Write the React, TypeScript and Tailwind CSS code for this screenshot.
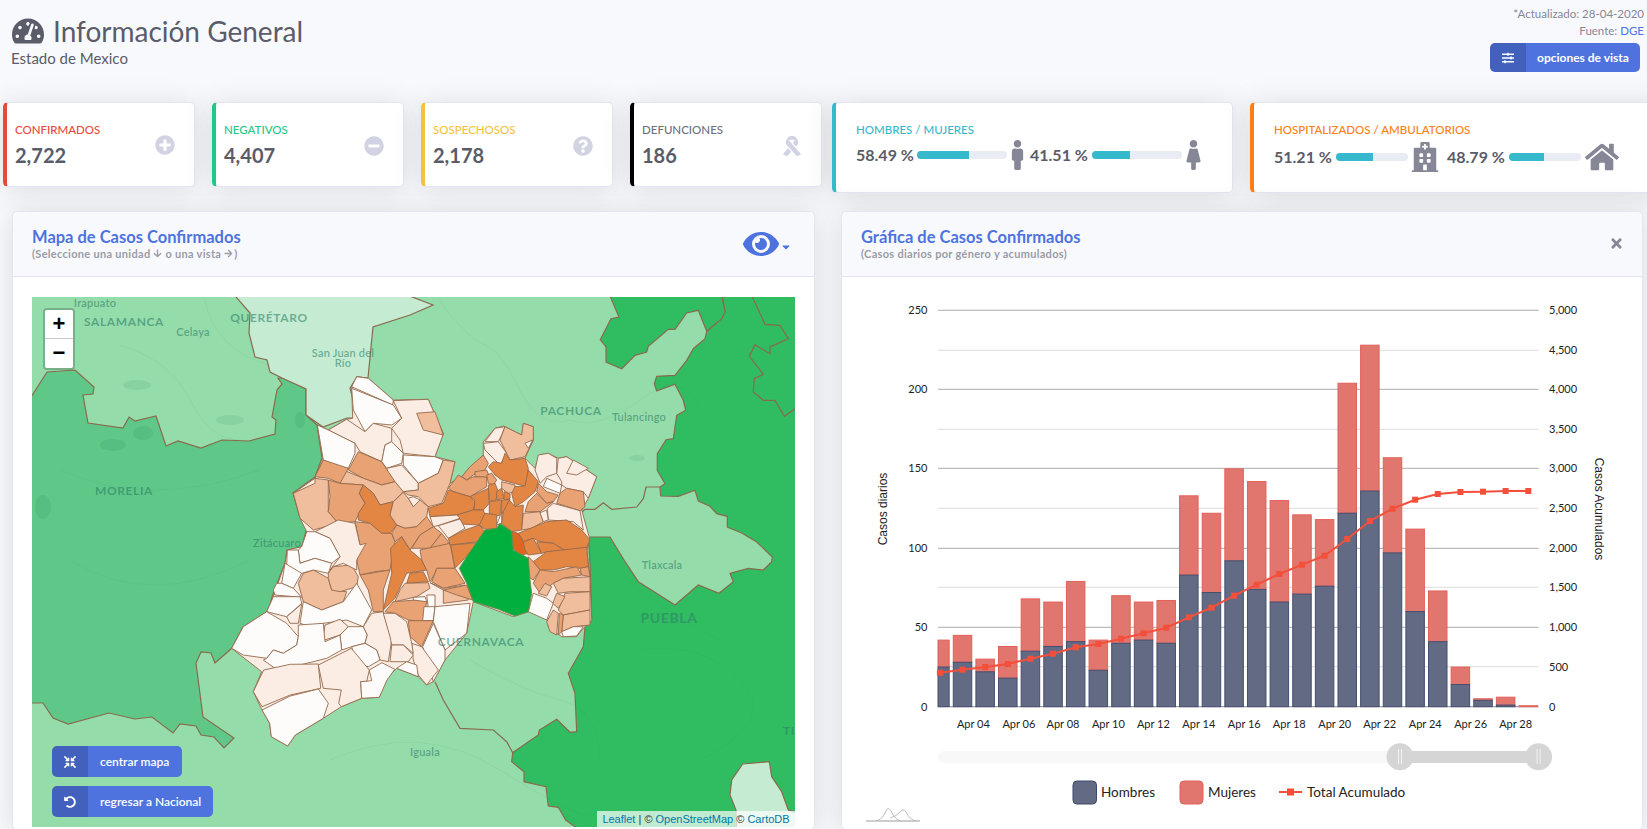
import React from "react";
import {
  FaTachometerAlt, FaPlusCircle, FaMinusCircle, FaQuestionCircle, FaRibbon, FaMale, FaFemale,
  FaHospital, FaHome, FaSlidersH, FaEye, FaCompressArrowsAlt, FaUndoAlt, FaTimes, FaCaretDown, FaArrowDown, FaArrowRight,
} from "react-icons/fa";

const conv = (s: string, ox: number, oy: number) =>
  s.trim().split(/\s+/).map((p) => {
    const [a, b] = p.split(",").map(Number);
    return `${(ox + a / 3).toFixed(1)},${(oy + b / 3).toFixed(1)}`;
  }).join(" ");
const Z3 = (s: string) => conv(s, 200, 360);
const R = (s: string) => conv(s, 420, 297);

const w = "#fdfcfb", p1 = "#fbece4", p2 = "#f0bd9d", p3 = "#e9a273", p4 = "#e38644", p5 = "#e0661f";

const munis: [string, string][] = [
  [p1, "470,50 505,55 580,120 685,118 730,220 705,290 765,305 750,370 785,350 850,285 850,245 885,205 910,198 965,225 970,190 1000,200 1000,240 975,295 1005,325 1020,285 1045,280 1075,295 1100,290 1190,350 1165,415 1145,450 1170,540 1160,570 1170,650 1175,780 1150,805 1130,830 1085,830 1045,800 1040,770 985,755 940,770 820,725 800,820 735,900 700,965 680,975 655,950 590,925 555,960 538,1012 485,1015 424,1040 370,1075 286,1125 263,1158 214,1130 209,1090 186,1050 160,995 185,935 95,865 130,800 200,755 220,710 255,610 262,570 305,560 320,515 300,475 280,400 345,355 370,300 352,195 385,210 440,178 458,175 455,85"],
  [w, "470,50 505,55 580,120 578,135 455,80"],
  [w, "455,85 580,135 605,175 575,195 520,190 495,215 460,150"],
  [p1, "580,122 685,118 730,222 705,290 610,280 600,240 575,205 605,175"],
  [p2, "650,160 705,155 730,225 670,210"],
  [p1, "385,210 440,178 495,215 520,190 575,205 575,245 555,255 545,305 480,275 465,250"],
  [w, "352,195 385,210 465,250 465,280 445,325 415,320 370,300"],
  [w, "575,245 610,280 605,310 560,325 545,305 555,255"],
  [w, "610,285 705,290 730,300 715,340 655,370 610,315"],
  [p1, "560,325 605,315 655,370 655,390 610,395 565,345"],
  [p2, "730,300 765,305 750,370 725,430 685,440 655,410 625,405 610,395 655,390 655,370 715,340"],
  [p3, "475,275 545,305 585,365 545,375 490,355 445,330"],
  [p2, "430,330 490,355 545,375 585,365 610,395 580,425 540,435 520,400 490,375 420,370"],
  [p3, "370,300 445,325 420,370 385,355 345,350"],
  [p2, "345,355 385,360 385,455 415,490 340,510 300,475 280,400 345,370"],
  [p3, "385,360 420,370 490,375 478,400 495,430 475,465 465,485 415,490 385,455 390,410"],
  [p4, "490,375 520,400 540,435 580,425 570,465 590,495 570,520 545,520 510,490 475,480 475,460 495,430 478,400"],
  [p2, "610,397 625,415 640,440 660,420 685,440 680,470 650,500 615,505 590,495 570,465 580,425"],
  [p1, "625,415 640,410 660,420 640,440"],
  [p3, "465,485 510,490 545,520 575,520 585,545 570,630 525,635 480,645 470,600 480,555"],
  [p3, "590,495 615,505 650,500 680,470 700,500 660,525 630,570 605,530 585,545 575,520"],
  [p3, "660,525 700,500 725,520 690,565 635,565"],
  [p3, "725,520 745,545 745,555 690,565"],
  [p4, "605,530 630,570 665,600 680,630 620,640 585,715 550,750 575,640 572,565"],
  [p4, "630,640 670,635 685,665 620,670"],
  [p3, "660,570 750,550 765,625 710,625 705,640 690,665 680,630 665,600"],
  [p3, "480,645 570,630 550,690 550,755 520,755 505,690"],
  [p3, "710,625 765,625 795,670 730,685 695,665 705,640"],
  [p2, "615,670 685,668 690,685 650,710 585,725 600,690"],
  [p2, "690,668 730,685 795,675 805,720 730,730 730,690"],
  [p3, "730,690 800,675 818,720 770,705"],
  [p3, "555,755 580,725 650,720 680,725 670,785 625,780 585,760"],
  [w, "640,712 675,710 680,725 640,720"],
  [w, "680,705 705,705 705,745 685,745"],
  [w, "672,740 705,740 700,782 668,782"],
  [p3, "625,782 700,782 665,860 630,830"],
  [w, "705,740 810,730 800,820 735,870 700,785"],
  [w, "700,790 735,870 735,900 700,965 680,900 668,860"],
  [p1, "635,850 665,860 715,930 680,975 655,945 640,900"],
  [p2, "340,630 385,655 395,690 440,695 430,725 365,750 310,725 295,670 310,640"],
  [p2, "385,640 400,620 455,615 475,650 470,680 420,695 395,690 385,655"],
  [p1, "345,515 415,480 465,490 480,555 498,550 470,600 470,630 430,610 400,620 390,630 420,590 390,535"],
  [w, "320,515 345,515 390,535 420,590 395,610 345,595 300,610 295,570 305,560"],
  [w, "262,570 295,570 300,610 345,595 395,610 385,640 340,630 305,640 295,650 260,615"],
  [w, "255,610 305,640 280,685 245,670"],
  [w, "230,670 245,670 280,685 305,712 225,705 220,690"],
  [w, "220,710 300,710 305,730 260,770 200,755"],
  [p1, "260,770 305,732 295,790 270,790"],
  [w, "310,725 365,750 430,725 470,670 515,750 490,800 440,780 370,790 330,800 300,790"],
  [p1, "375,795 420,778 445,800 420,825 368,842"],
  [w, "420,825 445,800 490,800 502,825 495,850 455,860 425,870"],
  [p1, "490,800 515,760 550,755 575,840 565,905 540,900 530,870 495,850 502,825"],
  [p1, "550,760 585,760 620,785 635,850 640,880 610,855 575,855 570,830"],
  [p1, "575,855 610,855 640,885 625,905 570,905"],
  [w, "590,925 620,905 650,915 655,950"],
  [w, "455,860 495,850 530,870 540,900 505,920 470,910"],
  [w, "95,865 130,800 200,755 260,790 295,830 290,855 250,880 220,870 200,895 130,885"],
  [w, "295,795 370,790 375,845 420,825 425,870 380,895 300,915 225,925 190,900 200,895 220,870 250,880 290,855 295,830"],
  [p1, "160,995 191,930 271,913 355,912 362,985 271,1005 186,1040"],
  [p1, "355,915 454,865 508,930 500,965 482,965 485,1015 424,1040 416,1030 424,990 370,985"],
  [w, "485,1015 482,965 515,962 508,930 546,908 584,928 561,960 538,1012"],
  [w, "186,1050 271,1008 355,987 385,1030 370,1075 286,1125 263,1158 214,1130 209,1090"],
  [p1, "885,205 915,200 905,225 895,245 855,245"],
  [p1, "850,250 895,245 920,280 900,315 855,270"],
  [p2, "915,200 965,225 970,190 1000,200 1000,240 975,290 930,300 900,240"],
  [w, "975,250 998,240 985,265"],
  [p3, "850,285 865,310 855,330 820,345 800,360 785,350 810,320"],
  [p4, "915,280 930,300 975,295 985,325 980,380 905,360 885,345 865,320 880,305 905,310"],
  [p3, "775,345 800,360 820,350 860,350 860,380 810,410 760,395 745,385"],
  [p3, "825,335 860,330 870,355 850,350 825,350"],
  [p4, "745,390 810,410 825,425 820,450 770,465 690,470 685,445 730,430"],
  [p4, "810,410 865,385 868,430 850,450 822,450 825,420"],
  [p3, "860,345 875,340 890,360 880,375 865,370"],
  [p2, "905,365 945,375 945,395 925,400 905,385"],
  [p4, "985,330 1015,365 1005,395 970,425 945,440 935,400 945,380 975,378"],
  [p4, "865,375 885,370 895,395 885,425 868,420"],
  [p4, "890,395 905,385 912,415 890,420"],
  [p4, "912,395 930,402 930,415 912,420"],
  [p4, "868,425 905,420 900,465 890,468 868,460"],
  [p4, "905,420 930,418 910,460 905,460"],
  [p4, "820,450 850,450 855,465 840,495 780,492 770,465"],
  [p4, "855,460 890,465 890,505 855,508 838,495"],
  [w, "905,455 905,490 890,495"],
  [p4, "928,420 945,440 970,435 965,510 935,515 905,490 910,455"],
  [p3, "1015,370 1040,395 1075,405 1060,425 1040,430 1010,395"],
  [p1, "1015,285 1045,280 1070,295 1070,340 1040,350 1020,370 1005,330"],
  [w, "1040,355 1085,375 1080,400 1030,380"],
  [p1, "1075,295 1100,290 1190,350 1165,415 1150,395 1100,385 1085,375 1085,365 1070,340"],
  [p1, "1100,340 1120,300 1165,325 1130,345"],
  [p3, "1100,385 1150,395 1155,440 1140,452 1070,430 1080,400"],
  [p3, "1010,400 1040,430 1060,425 1020,455 975,455 985,425"],
  [p2, "970,460 1020,455 1030,485 995,505 965,510"],
  [p1, "1060,430 1140,452 1150,510 1120,485 1045,480 1042,445"],
  [p1, "1020,458 1040,450 1045,480 1030,485"],
  [p4, "955,520 1040,485 1100,480 1145,510 1170,540 1160,562 1100,575 1060,550 1020,545 1000,535 970,545"],
  [p5, "935,515 955,520 970,545 990,580 960,585 940,565"],
  [p4, "970,545 1000,535 1025,580 985,585 975,570"],
  [p4, "1010,545 1060,550 1100,575 1040,575 1025,580"],
  [p4, "1000,605 1040,575 1160,562 1165,620 1140,625 1100,620 1060,630 1020,630"],
  [p3, "985,590 1000,605 1020,630 1000,660 985,650"],
  [p3, "1020,630 1060,635 1130,620 1145,645 1090,655 1060,670 1020,700 1000,670"],
  [p3, "1140,625 1165,620 1170,650 1145,645"],
  [p2, "1060,670 1090,655 1170,650 1170,695 1110,695 1075,700"],
  [p2, "1095,700 1170,695 1170,750 1090,765 1075,750"],
  [p2, "1035,670 1055,680 1040,708 1015,700"],
  [w, "1000,700 1040,715 1060,730 1040,780 985,755"],
  [p2, "1070,700 1095,710 1075,745 1058,730"],
  [p2, "1090,765 1170,750 1170,795 1120,800 1085,815"],
  [w, "1085,815 1120,800 1150,800 1130,828 1090,830"],
  [p2, "1060,750 1075,760 1070,825 1050,815 1040,785"],
  [p3, "1078,760 1090,765 1085,815 1075,825"],
  [p1, "690,470 770,465 780,475 720,495 700,500"],
  [p1, "715,497 780,477 795,505 745,535"],
  [p4, "795,510 838,495 855,515 835,545 750,555 745,535"],
  [p4, "752,555 835,548 780,610 765,625"],
];

const border = "#8a6a4e";

const labels: [string, number, number, number, boolean?][] = [
  ["Irapuato", 95, 307, 11],
  ["SALAMANCA", 124, 326, 12, true],
  ["Celaya", 193, 336, 11],
  ["QUERÉTARO", 269, 322, 12, true],
  ["San Juan del", 343, 357, 11],
  ["Río", 343, 367, 11],
  ["PACHUCA", 571, 415, 12, true],
  ["Tulancingo", 639, 421, 11],
  ["MORELIA", 124, 495, 12, true],
  ["Zitácuaro", 277, 547, 11],
  ["Tlaxcala", 662, 569, 11],
  ["PUEBLA", 669, 623, 14, true],
  ["Iguala", 425, 756, 11],
  ["TI", 789, 735, 12, true],
];

function MapArt() {
  return (
    <svg viewBox="32 297 763 530" className="block h-full w-full">
      <rect x="32" y="297" width="763" height="530" fill="#95dcab" />
      <polygon
        fill="#5fc888"
        stroke={border}
        strokeWidth="1.2"
        points="26,405 47,372 75,370 94,387 93,394 83,395 88,423 123,428 129,417 135,421 156,416 166,446 178,441 201,448 222,440 249,441 275,434 276,420 272,417 277,390 282,384 278,378 287,378 306,389 306,415 317,425 322,458 315,477 293,493 300,517 307,527 302,547 287,550 285,563 272,597 267,617 243,627 232,648 215,663 211,653 201,652 196,663 203,717 234,738 224,748 214,737 201,735 196,726 180,724 173,733 152,717 135,719 109,713 68,724 53,718 43,703 26,703"
      />
      <g fill="#55be80">
        <ellipse cx="113" cy="445" rx="13" ry="6" />
        <ellipse cx="143" cy="433" rx="10" ry="7" />
        <ellipse cx="43" cy="507" rx="8" ry="12" />
        <ellipse cx="300" cy="420" rx="5" ry="8" />
      </g>
      <g fill="#87d2a0">
        <ellipse cx="137" cy="385" rx="14" ry="5" />
        <ellipse cx="230" cy="420" rx="14" ry="5" />
        <ellipse cx="637" cy="458" rx="8" ry="3" />
      </g>
      <polygon
        fill="#c5ebd3"
        stroke={border}
        strokeWidth="1.2"
        points="230,290 250,313 249,333 255,357 267,360 270,372 282,378 306,389 306,415 323,427 347,418 358,418 350,388 357,377 368,378 373,327 410,315 433,305 394,290"
      />
      <polygon
        fill="#30bd62"
        stroke={border}
        strokeWidth="1.2"
        points={R("905,-15 915,45 905,65 860,103 855,125 820,155 800,190 765,235 710,238 703,260 710,282 765,262 790,310 797,340 770,355 760,425 738,428 712,470 712,520 735,560 720,570 722,597 775,598 825,580 835,612 870,628 890,650 922,658 922,690 965,708 1010,735 1057,780 1055,794 1030,819 985,814 930,829 940,854 897,889 835,864 765,924 655,854 612,789 570,720 505,720 510,800 515,969 495,989 490,1049 445,1129 465,1189 470,1304 450,1306 410,1267 358,1299 355,1314 278,1367 275,1394 312,1424 312,1454 378,1469 385,1527 415,1531 437,1569 500,1615 1140,1615 1140,-15")}
      />
      <polygon
        fill="#30bd62"
        stroke={border}
        strokeWidth="1.2"
        points={R("565,-15 597,60 573,65 541,128 558,150 558,195 605,215 645,175 680,165 685,148 745,97 765,97 800,48 835,40 860,103 905,65 915,45 903,-15")}
      />
      <polygon
        fill="#c5ebd3"
        stroke={border}
        strokeWidth="1.2"
        points={R("968,1401 1048,1394 1055,1439 1085,1484 1105,1539 1140,1550 1140,1615 950,1615 948,1539 930,1494 935,1449")}
      />
      <g fill="none" stroke={border} strokeWidth="1.2">
        <polyline points={R("990,-15 1035,82 1080,85 1105,125 1050,150 1050,170 1005,143 988,178 1030,232 1003,245 1000,285 1030,310 1065,310 1093,358 1140,325")} />
        <polyline points={R("495,637 525,637 550,617 575,637 650,630 670,605 678,570 720,570")} />
        <polyline points={R("45,1154 70,1209 120,1294 220,1299 260,1334 278,1367")} />
        <polyline points={R("470,660 495,637")} />
        <polyline points={R("475,660 505,720")} />
      </g>
      <g fill="none" stroke="#1c6b45" strokeOpacity="0.08" strokeWidth="0.8">
        <path d="M438 300 Q470 340 485 345 T520 390 T570 420 Q600 430 640 400 T700 405" />
        <path d="M120 345 Q170 360 190 400 T240 440 M205 300 Q215 350 270 365" />
        <path d="M470 660 Q520 690 560 700 T600 760 M330 760 Q420 720 500 770 T590 815" />
        <path d="M620 575 Q680 620 720 640 M60 470 Q150 510 260 470 M70 560 Q150 610 250 560" />
        <path d="M640 650 Q700 640 740 680 T700 760" />
      </g>
      <g fontFamily="Lato, sans-serif" textAnchor="middle">
        {labels.map(([t, x, y, s, b]) => (
          <text key={t} x={x} y={y} fontSize={s} fontWeight={b ? 700 : 600} letterSpacing={b ? 0.6 : 0.2} fill="#2f7f66" fillOpacity="0.6">
            {t}
          </text>
        ))}
      </g>
      <g stroke="#946a4c" strokeWidth="0.9" strokeLinejoin="round">
        {munis.map(([f, p], i) => (
          <polygon key={i} fill={f} points={Z3(p)} />
        ))}
        <polygon
          fill="#00af3e"
          stroke="#6f8a4a"
          points={Z3("900,490 935,515 940,570 985,595 990,660 995,700 985,755 945,768 895,748 820,725 800,670 778,625 800,590 855,510 890,505")}
        />
      </g>
      <text x="481" y="646" fontFamily="Lato, sans-serif" textAnchor="middle" fontSize="12" fontWeight="700" letterSpacing="0.6" fill="#2f7f66" fillOpacity="0.6">
        CUERNAVACA
      </text>
    </svg>
  );
}

const cumY = [672.7, 669.7, 667, 664, 658.7, 653.7, 647.3, 644, 638.7, 633.3, 627.7, 617.3, 607.7, 595.7, 584.7, 574, 564.7, 555.7, 539, 521, 508.7, 499.7, 494, 492, 491.7, 491, 491];
const hom = [25, 28, 22, 18, 35, 38, 41, 23, 40, 42, 40, 83, 72, 92, 74, 66, 71, 76, 122, 136, 97, 60, 41, 14, 4, 1, 0];
const tot = [42, 45, 30, 38, 68, 66, 79, 42, 70, 66, 67, 133, 122, 150, 142, 130, 121, 118, 204, 228, 157, 112, 73, 25, 5, 6, 0.6];

const Y0 = 706.7;
const U = (706.7 - 310.3) / 250;
const cx = (i: number) => 939.9 + i * 22.63;

const left = [[250, 310.3], [200, 389.3], [150, 468.3], [100, 548.3], [50, 627.3], [0, 706.7]];
const right = [["5,000", 310.3], ["4,500", 350.3], ["4,000", 389.3], ["3,500", 429.3], ["3,000", 468.3], ["2,500", 508.3], ["2,000", 548.3], ["1,500", 587.3], ["1,000", 627.3], ["500", 666.7], ["0", 706.7]];
const xl = ["Apr 04", "Apr 06", "Apr 08", "Apr 10", "Apr 12", "Apr 14", "Apr 16", "Apr 18", "Apr 20", "Apr 22", "Apr 24", "Apr 26", "Apr 28"];
const xc = [247, 346, 442, 541, 639, 738, 837, 935, 1034, 1132, 1231, 1330, 1428];

function Chart() {
  const f = "Lato, sans-serif";
  return (
    <svg viewBox="842 277 800 552" className="block h-full w-full">
      {right.map(([t, y], i) => (
        <line key={i} x1="938" x2="1538.6" y1={y as number} y2={y as number} stroke={i % 2 === 0 && i < 10 ? "#acacac" : i === 10 ? "#888" : "#dcdcdc"} strokeWidth="1" />
      ))}
      {left.map(([t, y]) => (
        <text key={t} x="927.5" y={y + 4} textAnchor="end" fontFamily={f} fontSize="11" fill="#222">{t}</text>
      ))}
      {right.map(([t, y]) => (
        <text key={t as string} x="1549" y={(y as number) + 4} fontFamily={f} fontSize="11" fill="#222">{t}</text>
      ))}
      {hom.map((h, i) => {
        const x = Math.max(938, cx(i) - 9.25);
        const wd = cx(i) + 9.25 - x;
        return (
          <g key={i}>
            <rect x={x} y={Y0 - tot[i] * U} width={wd} height={(tot[i] - h) * U} fill="#e1766f" stroke="#e2605a" strokeWidth="1" />
            {h > 0 && <rect x={x} y={Y0 - h * U} width={wd} height={h * U} fill="#626b83" stroke="#454f70" strokeWidth="1" />}
          </g>
        );
      })}
      <polyline fill="none" stroke="#f44f3b" strokeWidth="2" points={cumY.map((y, i) => `${cx(i)},${y}`).join(" ")} />
      {cumY.map((y, i) => (
        <rect key={i} x={cx(i) - 3} y={y - 3} width="6" height="6" fill="#f44f3b" />
      ))}
      {xl.map((t, i) => (
        <text key={t} x={860 + xc[i] / 2.178} y="728" textAnchor="middle" fontFamily={f} fontSize="11" fill="#222">{t}</text>
      ))}
      <text transform="translate(887 509) rotate(-90)" textAnchor="middle" fontFamily="'Liberation Sans', sans-serif" fontSize="12" fill="#222">Casos diarios</text>
      <text transform="translate(1595 509) rotate(90)" textAnchor="middle" fontFamily="'Liberation Sans', sans-serif" fontSize="12" fill="#222">Casos Acumulados</text>

      <rect x="938" y="751" width="601" height="12" rx="6" fill="#f8f8f8" />
      <rect x="1400" y="751" width="138" height="12" fill="#d5d5d5" />
      {[1400, 1538.6].map((c) => (
        <g key={c}>
          <circle cx={c} cy="756.7" r="13.5" fill="#d5d5d5" />
          <line x1={c - 1.5} x2={c - 1.5} y1="749" y2="764" stroke="#f0f0f0" />
          <line x1={c + 1.5} x2={c + 1.5} y1="749" y2="764" stroke="#f0f0f0" />
        </g>
      ))}

      <rect x="1073" y="781" width="23.5" height="23" rx="4" fill="#626b83" stroke="#3f4a6b" />
      <text x="1101" y="797" fontFamily={f} fontSize="13.5" fill="#222">Hombres</text>
      <rect x="1180" y="781" width="23" height="23" rx="4" fill="#e1766f" stroke="#e2605a" />
      <text x="1208" y="797" fontFamily={f} fontSize="13.5" fill="#222">Mujeres</text>
      <line x1="1279" x2="1302" y1="792" y2="792" stroke="#f44f3b" strokeWidth="2" />
      <rect x="1287" y="788.5" width="7" height="7" fill="#f44f3b" />
      <text x="1307" y="797" fontFamily={f} fontSize="13.5" fill="#222">Total Acumulado</text>

      <g fill="none" stroke="#bdbdbd" strokeWidth="1">
        <path strokeWidth="1.6" d="M866 821 H920" />
        <path d="M876 821 Q882 820 886 811 Q888 806 891 811 Q895 820 901 821" />
        <path d="M890 818 Q897 816 900 812 Q903 808 906 812 Q910 820 916 821" />
      </g>
    </svg>
  );
}

const stats = [
  { t: "CONFIRMADOS", v: "2,722", b: "border-l-[#e74a3b]", c: "text-[#e74a3b]", I: FaPlusCircle, m: "mt-0" },
  { t: "NEGATIVOS", v: "4,407", b: "border-l-[#1cc88a]", c: "text-[#1cc88a]", I: FaMinusCircle, m: "mt-[3px]" },
  { t: "SOSPECHOSOS", v: "2,178", b: "border-l-[#f6c23e]", c: "text-[#f6c23e]", I: FaQuestionCircle, m: "mt-[3px]" },
  { t: "DEFUNCIONES", v: "186", b: "border-l-black", c: "text-[#6e707e]", I: FaRibbon, m: "mt-[3px]" },
];

const cardBase = "bg-white rounded-[5px] border border-[#e3e6f0] border-l-4 shadow-[0_2.4px_28px_0_rgba(58,59,69,0.15)] shrink-0";

function Bar({ wd, pct }: { wd: string; pct: string }) {
  return (
    <div className={`h-2 rounded-full bg-[#eaecf4] overflow-hidden ${wd}`}>
      <div className={`h-full bg-[#36b9cc] ${pct}`} />
    </div>
  );
}

function IconBtn({ I, children, wd }: any) {
  return (
    <div className={`flex h-[31px] items-stretch overflow-hidden rounded-[5px] bg-[#4e73df] text-white ${wd}`}>
      <span className="flex w-9 shrink-0 items-center justify-center bg-black/15 text-[12px]"><I /></span>
      <span className="flex items-center pl-3 text-[12px] font-semibold">{children}</span>
    </div>
  );
}

export default function App() {
  return (
    <div className="h-screen w-full overflow-hidden bg-[#f8f9fc] text-[#5a5c69] font-['Lato',sans-serif]">
      <header className="flex h-[102px] justify-between pr-[3px]">
        <div className="pl-[12px] pt-[13px]">
          <div className="flex items-center gap-[9px] text-[28px] leading-[36px] font-normal">
            <FaTachometerAlt className="text-[32px]" />
            <span>Información General</span>
          </div>
          <div className="ml-[-1px] mt-[-1px] text-[15px] leading-[20px]">Estado de Mexico</div>
        </div>
        <div className="flex flex-col items-end pt-[5px]">
          <div className="text-[11.5px] leading-[17px] text-[#858796]">*Actualizado: 28-04-2020</div>
          <div className="text-[11.5px] leading-[17px] text-[#858796]">Fuente: <span className="text-[#4e73df]">DGE</span></div>
          <div className="mr-[4px] mt-[4px] flex h-[29px] w-[150px] items-stretch overflow-hidden rounded-[5px] bg-[#4e73df] text-white">
            <span className="flex w-9 shrink-0 items-center justify-center bg-black/15 text-[12px]"><FaSlidersH /></span>
            <span className="flex items-center pl-[11px] text-[12px] font-bold">opciones de vista</span>
          </div>
        </div>
      </header>

      <div className="flex h-[109px] items-start pl-[3px]">
        <div className="flex gap-[17px]">
          {stats.map((s) => (
            <div key={s.t} className={`${cardBase} ${s.b} flex h-[85px] w-[192px] items-center justify-between pl-[8px] pr-[19px]`}>
              <div className="pb-[1px]">
                <div className={`text-[11.5px] font-medium leading-[18px] ${s.c}`}>{s.t}</div>
                <div className="mt-[4px] text-[20px] font-bold leading-[24px]">{s.v}</div>
              </div>
              <s.I className={`text-[20px] text-[#d1d3e2] ${s.m}`} />
            </div>
          ))}
        </div>
        <div className={`${cardBase} border-l-[#36b9cc] ml-[10px] h-[91px] w-[401px] pl-[20px] pt-[18px]`}>
          <div className="text-[11.5px] font-medium leading-[18px] text-[#36b9cc]">HOMBRES / MUJERES</div>
          <div className="mt-[1px] flex items-center text-[16px] font-bold">
            <span className="w-[61px]">58.49 %</span>
            <Bar wd="w-[90px]" pct="w-[58%]" />
            <FaMale className="w-[21px] text-[30px] text-[#858796]" />
            <span className="ml-[2px] w-[62px]">41.51 %</span>
            <Bar wd="w-[90px]" pct="w-[42%]" />
            <FaFemale className="ml-[1px] w-[21px] text-[30px] text-[#858796]" />
          </div>
        </div>
        <div className={`${cardBase} border-l-[#fd7e14] border-r-0 ml-[17px] h-[91px] w-[420px] pl-[20px] pt-[18px]`}>
          <div className="text-[11.5px] font-medium leading-[18px] text-[#fd7e14]">HOSPITALIZADOS / AMBULATORIOS</div>
          <div className="mt-[1px] flex items-center text-[16px] font-bold">
            <span className="w-[62px]">51.21 %</span>
            <Bar wd="w-[72px]" pct="w-[51%]" />
            <FaHospital className="ml-[2px] text-[30px] text-[#858796]" />
            <span className="ml-[7px] w-[62px]">48.79 %</span>
            <Bar wd="w-[72px]" pct="w-[49%]" />
            <FaHome className="ml-[4px] text-[34px] text-[#858796]" />
          </div>
        </div>
      </div>

      <div className="flex gap-[26px] pl-[12px]">
        <section className="w-[803px] shrink-0 rounded-[5px] border border-[#e3e6f0] bg-white shadow-[0_2.4px_28px_0_rgba(58,59,69,0.15)]">
          <div className="flex h-[65px] items-center justify-between border-b border-[#e3e6f0] bg-[#f8f9fc] pl-[19px] pr-[22px] rounded-t-[5px]">
            <div className="mt-[-1px]">
              <div className="text-[16.5px] font-bold leading-[20px] text-[#4e73df]">Mapa de Casos Confirmados</div>
              <div className="flex items-center gap-[3px] text-[11px] font-bold leading-[14px] tracking-[0.3px] text-[#9a9ca8]">
                <span>(Seleccione una unidad</span><FaArrowDown className="text-[9px]" /><span>o una vista</span><FaArrowRight className="text-[9px]" /><span className="ml-[-2px]">)</span>
              </div>
            </div>
            <div className="flex items-end text-[#4e73df]">
              <FaEye className="text-[36px]" />
              <FaCaretDown className="mb-[9px] ml-[1px] text-[12px]" />
            </div>
          </div>
          <div className="px-[19px] pt-[20px]">
            <div className="relative h-[530px] w-[763px] overflow-hidden">
              <MapArt />
              <div className="absolute left-[11px] top-[11px] w-[32px] rounded-[4px] border-2 border-black/20 bg-clip-padding font-['Liberation_Sans',sans-serif] text-[22px] font-bold leading-[28px] text-black">
                <div className="h-[29px] rounded-t-[2px] border-b border-[#ccc] bg-white text-center">+</div>
                <div className="h-[29px] rounded-b-[2px] bg-white text-center">−</div>
              </div>
              <div className="absolute bottom-[50px] left-[20px]">
                <IconBtn I={FaCompressArrowsAlt} wd="w-[130px]">centrar mapa</IconBtn>
              </div>
              <div className="absolute bottom-[10px] left-[20px]">
                <IconBtn I={FaUndoAlt} wd="w-[161px]">regresar a Nacional</IconBtn>
              </div>
              <div className="absolute bottom-0 right-0 flex h-[16px] w-[198px] items-center justify-center bg-white/70 font-['Liberation_Sans',sans-serif] text-[11px] text-[#333]">
                <span className="text-[#0078a8]">Leaflet</span>&nbsp;| ©&nbsp;<span className="text-[#0078a8]">OpenStreetMap</span>&nbsp;©&nbsp;<span className="text-[#0078a8]">CartoDB</span>
              </div>
            </div>
          </div>
        </section>

        <section className="w-[802px] shrink-0 rounded-[5px] border border-[#e3e6f0] bg-white shadow-[0_2.4px_28px_0_rgba(58,59,69,0.15)]">
          <div className="flex h-[65px] items-center justify-between border-b border-[#e3e6f0] bg-[#f8f9fc] pl-[19px] pr-[18px] rounded-t-[5px]">
            <div className="mt-[-1px]">
              <div className="text-[16.5px] font-bold leading-[20px] text-[#4e73df]">Gráfica de Casos Confirmados</div>
              <div className="text-[11px] font-bold leading-[14px] tracking-[0.3px] text-[#9a9ca8]">(Casos diarios por género y acumulados)</div>
            </div>
            <FaTimes className="mt-[-2px] text-[15px] text-[#858796]" />
          </div>
          <div className="h-[552px] w-[800px]">
            <Chart />
          </div>
        </section>
      </div>
    </div>
  );
}
